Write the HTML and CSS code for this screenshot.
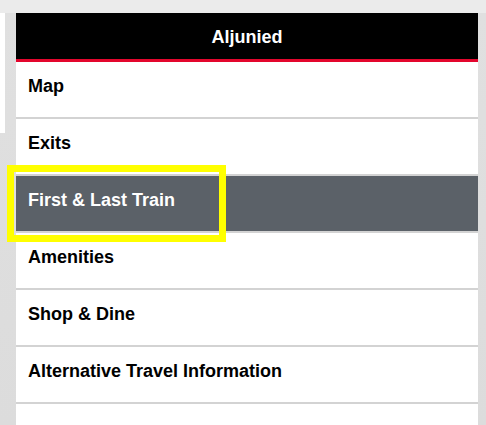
FILE: index.html
```html
<!DOCTYPE html>
<html>
<head>
<meta charset="utf-8">
<link rel="stylesheet" href="styles.css">
</head>
<body>
<div class="page">
  <div class="side"></div>
  <div class="panel">
    <div class="head">Aljunied</div>
    <ul class="menu">
      <li class="item">Map</li>
      <li class="item">Exits</li>
      <li class="item active">First &amp; Last Train<span class="focus"></span></li>
      <li class="item">Amenities</li>
      <li class="item">Shop &amp; Dine</li>
      <li class="item">Alternative Travel Information</li>
      <li class="item"></li>
    </ul>
  </div>
</div>
</body>
</html>
```
FILE: styles.css
```css
html, body {
  margin: 0;
  padding: 0;
  height: 100%;
  overflow: hidden;
}
body {
  background: linear-gradient(180deg, #ebebeb 0, #ebebeb 13px, #e0e0e0 13px, #dcdcdc 100%);
  font-family: "Liberation Sans", Arial, sans-serif;
}
.page {
  display: flex;
  align-items: flex-start;
  padding-top: 13px;
}
.side {
  width: 5px;
  height: 120px;
  background: #ffffff;
  flex: none;
}
.panel {
  margin-left: 11px;
  width: 462px;
  background: #ffffff;
  flex: none;
}
.head {
  background: #000000;
  color: #ffffff;
  font-weight: bold;
  font-size: 18px;
  line-height: 21px;
  text-align: center;
  padding: 14px 0 11px;
  border-bottom: 3px solid #e3062d;
}
.menu {
  list-style: none;
  margin: 0;
  padding: 0;
}
.item {
  position: relative;
  box-sizing: border-box;
  height: 57px;
  padding: 14px 12px 0;
  font-size: 18px;
  line-height: 21px;
  font-weight: bold;
  color: #000000;
  border-bottom: 2px solid #d3d3d3;
}
.item.active {
  background: #5b6168;
  color: #ffffff;
}
.focus {
  position: absolute;
  left: -9px;
  top: -11px;
  width: 219px;
  height: 77px;
  box-sizing: border-box;
  border: 7px solid #ffff00;
}
```
